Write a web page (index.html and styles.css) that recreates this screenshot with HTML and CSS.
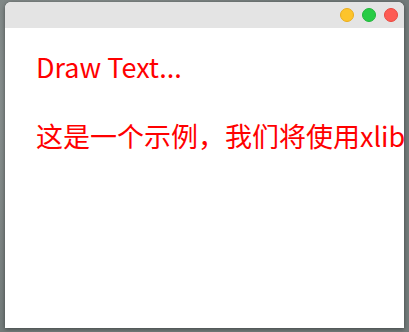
FILE: index.html
```html
<!DOCTYPE html>
<html lang="zh">
<head>
    <meta charset="UTF-8">
    <title>Draw Text</title>
    <link rel="stylesheet" href="styles.css">
</head>
<body>
    <div class="window">
        <div class="titlebar">
            <span class="dot dot-min"></span>
            <span class="dot dot-max"></span>
            <span class="dot dot-close"></span>
        </div>
        <div class="content">
            <p class="line">Draw Text...</p>
            <p class="line line-cn">这是一个示例，我们将使用xlib绘制文本</p>
        </div>
    </div>
</body>
</html>
```

FILE: styles.css
```css
* {
    box-sizing: border-box;
    margin: 0;
    padding: 0;
}

body {
    width: 409px;
    height: 332px;
    overflow: hidden;
    background-color: #7d8584;
    background-image: radial-gradient(circle at 20% 30%, #8e9594 0, #737b7a 60%);
    padding: 2px 5px 0 5px;
}

.window {
    width: 399px;
    height: 326px;
    background-color: #fff;
    border-radius: 6px 6px 0 0;
    overflow: hidden;
    box-shadow: 0 1px 4px rgba(0,0,0,0.45);
}

.titlebar {
    height: 26px;
    background-color: #e4e4e4;
    display: flex;
    justify-content: flex-end;
    align-items: center;
    gap: 8px;
    padding-right: 6px;
}

.dot {
    width: 14px;
    height: 14px;
    border-radius: 50%;
}

.dot-min {
    background-color: #fdc42b;
    border: 1px solid #e9ac1c;
}

.dot-max {
    background-color: #27cc45;
    border: 1px solid #21b53b;
}

.dot-close {
    background-color: #fd5c54;
    border: 1px solid #e8483f;
}

.content {
    padding: 20px 0 0 31px;
    color: #ff0000;
    font-family: "Noto Sans CJK SC", "Noto Sans", sans-serif;
    font-size: 27px;
    white-space: nowrap;
}

.line {
    line-height: 38px;
}

.line-cn {
    margin-top: 31px;
}
```
